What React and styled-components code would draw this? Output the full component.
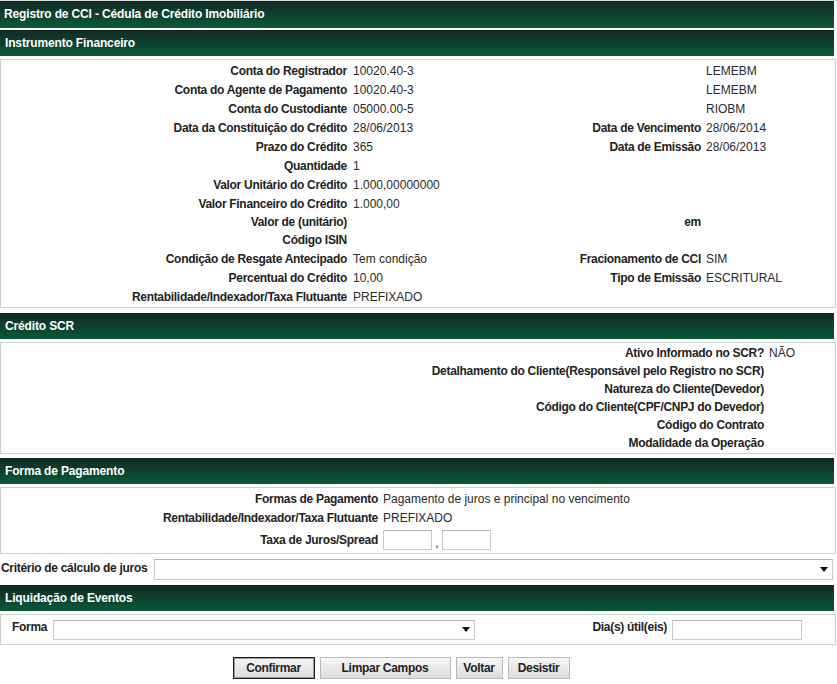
import React from "react";
import styled, { createGlobalStyle } from "styled-components";


const GlobalStyle = createGlobalStyle`
    body {
        margin: 0;
        background: #fff;
        font-family: "Liberation Sans", Arial, sans-serif;
        font-size: 12px;
        color: #222;
    }
`;

const Page = styled.div`
    width: 837px;
    border-top: 1px solid #d6dad8;
`;

const Bar = styled.div`
    width: 834px;
    height: ${props => props.$h}px;
    line-height: ${props => props.$h}px;
    margin-top: ${props => props.$mt}px;
    padding-left: ${props => props.$pl}px;
    box-sizing: border-box;
    background: linear-gradient(to bottom, #112924 0%, #0d4330 55%, #0a5a37 100%);
    color: #fff;
    font-weight: bold;
    letter-spacing: -0.15px;
    white-space: nowrap;
`;

const Panel = styled.div`
    width: 836px;
    margin-top: 3px;
    box-sizing: border-box;
    border: 1px solid #cfd1d0;
    padding: ${props => props.$pad ?? '1px 0'};
`;

const Row = styled.div`
    display: grid;
    grid-template-columns: ${props => props.$cols};
    height: ${props => props.$h}px;
    align-items: center;
`;

const Label = styled.div`
    text-align: right;
    font-weight: bold;
    letter-spacing: -0.3px;
    padding-right: ${props => props.$pr ?? 3}px;
    white-space: nowrap;
    color: #222;
`;

const Value = styled.div`
    padding-left: ${props => props.$pl ?? 3}px;
    white-space: nowrap;
    color: #2a2a2a;
    display: flex;
    align-items: center;
`;

const TextBox = styled.div`
    width: ${props => props.$w}px;
    height: ${props => props.$h}px;
    margin-left: ${props => props.$ml ?? 0}px;
    box-sizing: border-box;
    border: 1px solid #c9c9c9;
    border-top-color: #b4b4b4;
    background: #fff;
    flex: none;
`;

const Comma = styled.span`
    width: 10px;
    text-align: center;
    padding-top: 6px;
`;

const SelectBox = styled.div`
    width: ${props => props.$w}px;
    height: ${props => props.$h}px;
    box-sizing: border-box;
    border: 1px solid #c9c9c9;
    border-top-color: #b0b0b0;
    background: #fff;
    display: flex;
    align-items: center;
    justify-content: flex-end;
    padding-right: 4px;
    flex: none;
`;

const Arrow = styled.span`
    width: 0;
    height: 0;
    border-left: 4px solid transparent;
    border-right: 4px solid transparent;
    border-top: 5px solid #111;
`;

const FieldLine = styled.div`
    display: flex;
    align-items: center;
    box-sizing: border-box;
    height: ${props => props.$h}px;
    padding-top: ${props => props.$pt}px;
`;

const InlineLabel = styled.span`
    font-weight: bold;
    letter-spacing: -0.3px;
    white-space: nowrap;
    padding-left: ${props => props.$pl ?? 0}px;
    margin-bottom: ${props => props.$raise ?? 0}px;
    width: ${props => props.$w}px;
    text-align: ${props => props.$align || 'left'};
    box-sizing: border-box;
    flex: none;
`;

const Buttons = styled.div`
    display: flex;
    justify-content: center;
    gap: 5px;
    margin-top: 12px;
    padding-right: 35px;
`;

const Button = styled.button`
    width: ${props => props.$w}px;
    height: 22px;
    padding: 0;
    font-family: "Liberation Sans", Arial, sans-serif;
    font-size: 12px;
    font-weight: bold;
    letter-spacing: -0.3px;
    color: #222;
    background: linear-gradient(to bottom, #f7f7f7 0%, #e9e9e9 50%, #dcdcdc 100%);
    border: 1px solid ${props => props.$primary ? '#1e1e1e' : '#b9b9b9'};
    box-shadow: ${props => props.$primary ? 'inset 0 0 0 1px #9a9a9a' : 'none'};
    cursor: pointer;
`;


const instrumento = [
    ["Conta do Registrador", "10020.40-3", "", "LEMEBM"],
    ["Conta do Agente de Pagamento", "10020.40-3", "", "LEMEBM"],
    ["Conta do Custodiante", "05000.00-5", "", "RIOBM"],
    ["Data da Constituição do Crédito", "28/06/2013", "Data de Vencimento", "28/06/2014"],
    ["Prazo do Crédito", "365", "Data de Emissão", "28/06/2013"],
    ["Quantidade", "1"],
    ["Valor Unitário do Crédito", "1.000,00000000"],
    ["Valor Financeiro do Crédito", "1.000,00"],
    ["Valor de (unitário)", "", "em", ""],
    ["Código ISIN", ""],
    ["Condição de Resgate Antecipado", "Tem condição", "Fracionamento de CCI", "SIM"],
    ["Percentual do Crédito", "10,00", "Tipo de Emissão", "ESCRITURAL"],
    ["Rentabilidade/Indexador/Taxa Flutuante", "PREFIXADO"],
];

const creditoScr = [
    ["Ativo Informado no SCR?", "NÃO"],
    ["Detalhamento do Cliente(Responsável pelo Registro no SCR)", ""],
    ["Natureza do Cliente(Devedor)", ""],
    ["Código do Cliente(CPF/CNPJ do Devedor)", ""],
    ["Código do Contrato", ""],
    ["Modalidade da Operação", ""],
];


function rowHeight(values) {
    return values.some(v => v) ? 19 : 18;
}


export default function App() {
    return (
        <Page>
            <GlobalStyle />

            <Bar $h={27} $mt={0} $pl={4}>Registro de CCI - Cédula de Crédito Imobiliário</Bar>

            <Bar $h={26} $mt={2} $pl={5}>Instrumento Financeiro</Bar>
            <Panel>
                {instrumento.map((r, index) =>
                    <Row key={'inst-' + index} $cols="349px 229px 123px 1fr" $h={rowHeight([r[1], r[3]])}>
                        <Label>{r[0]}</Label>
                        <Value>{r[1]}</Value>
                        <Label $pr={1}>{r[2] || ''}</Label>
                        <Value $pl={4}>{r[3] || ''}</Value>
                    </Row>
                )}
            </Panel>

            <Bar $h={26} $mt={5} $pl={5}>Crédito SCR</Bar>
            <Panel $pad="0 0 1px">
                {creditoScr.map((r, index) =>
                    <Row key={'scr-' + index} $cols="766px 1fr" $h={rowHeight([r[1]])}>
                        <Label $pr={3}>{r[0]}</Label>
                        <Value $pl={2}>{r[1]}</Value>
                    </Row>
                )}
            </Panel>

            <Bar $h={26} $mt={4} $pl={5}>Forma de Pagamento</Bar>
            <Panel>
                <Row $cols="380px 1fr" $h={19}>
                    <Label>Formas de Pagamento</Label>
                    <Value $pl={2}>Pagamento de juros e principal no vencimento</Value>
                </Row>
                <Row $cols="380px 1fr" $h={19}>
                    <Label>Rentabilidade/Indexador/Taxa Flutuante</Label>
                    <Value $pl={2}>PREFIXADO</Value>
                </Row>
                <Row $cols="380px 1fr" $h={25}>
                    <Label>Taxa de Juros/Spread</Label>
                    <Value $pl={2}>
                        <TextBox $w={49} $h={20} />
                        <Comma>,</Comma>
                        <TextBox $w={49} $h={20} />
                    </Value>
                </Row>
            </Panel>

            <FieldLine $h={26} $pt={5}>
                <InlineLabel $pl={1} $w={154} $raise={3}>Critério de cálculo de juros</InlineLabel>
                <SelectBox $w={679} $h={21}><Arrow /></SelectBox>
            </FieldLine>

            <Bar $h={26} $mt={5} $pl={5}>Liquidação de Eventos</Bar>
            <Panel>
                <FieldLine $h={27} $pt={0}>
                    <InlineLabel $pl={11} $w={52} $raise={6}>Forma</InlineLabel>
                    <SelectBox $w={422} $h={20}><Arrow /></SelectBox>
                    <InlineLabel $w={192} $align="right" $raise={6}>Dia(s) útil(eis)</InlineLabel>
                    <TextBox $w={130} $h={20} $ml={5} />
                </FieldLine>
            </Panel>

            <Buttons>
                <Button $w={82} $primary>Confirmar</Button>
                <Button $w={131}>Limpar Campos</Button>
                <Button $w={47}>Voltar</Button>
                <Button $w={62}>Desistir</Button>
            </Buttons>
        </Page>
    );
}
